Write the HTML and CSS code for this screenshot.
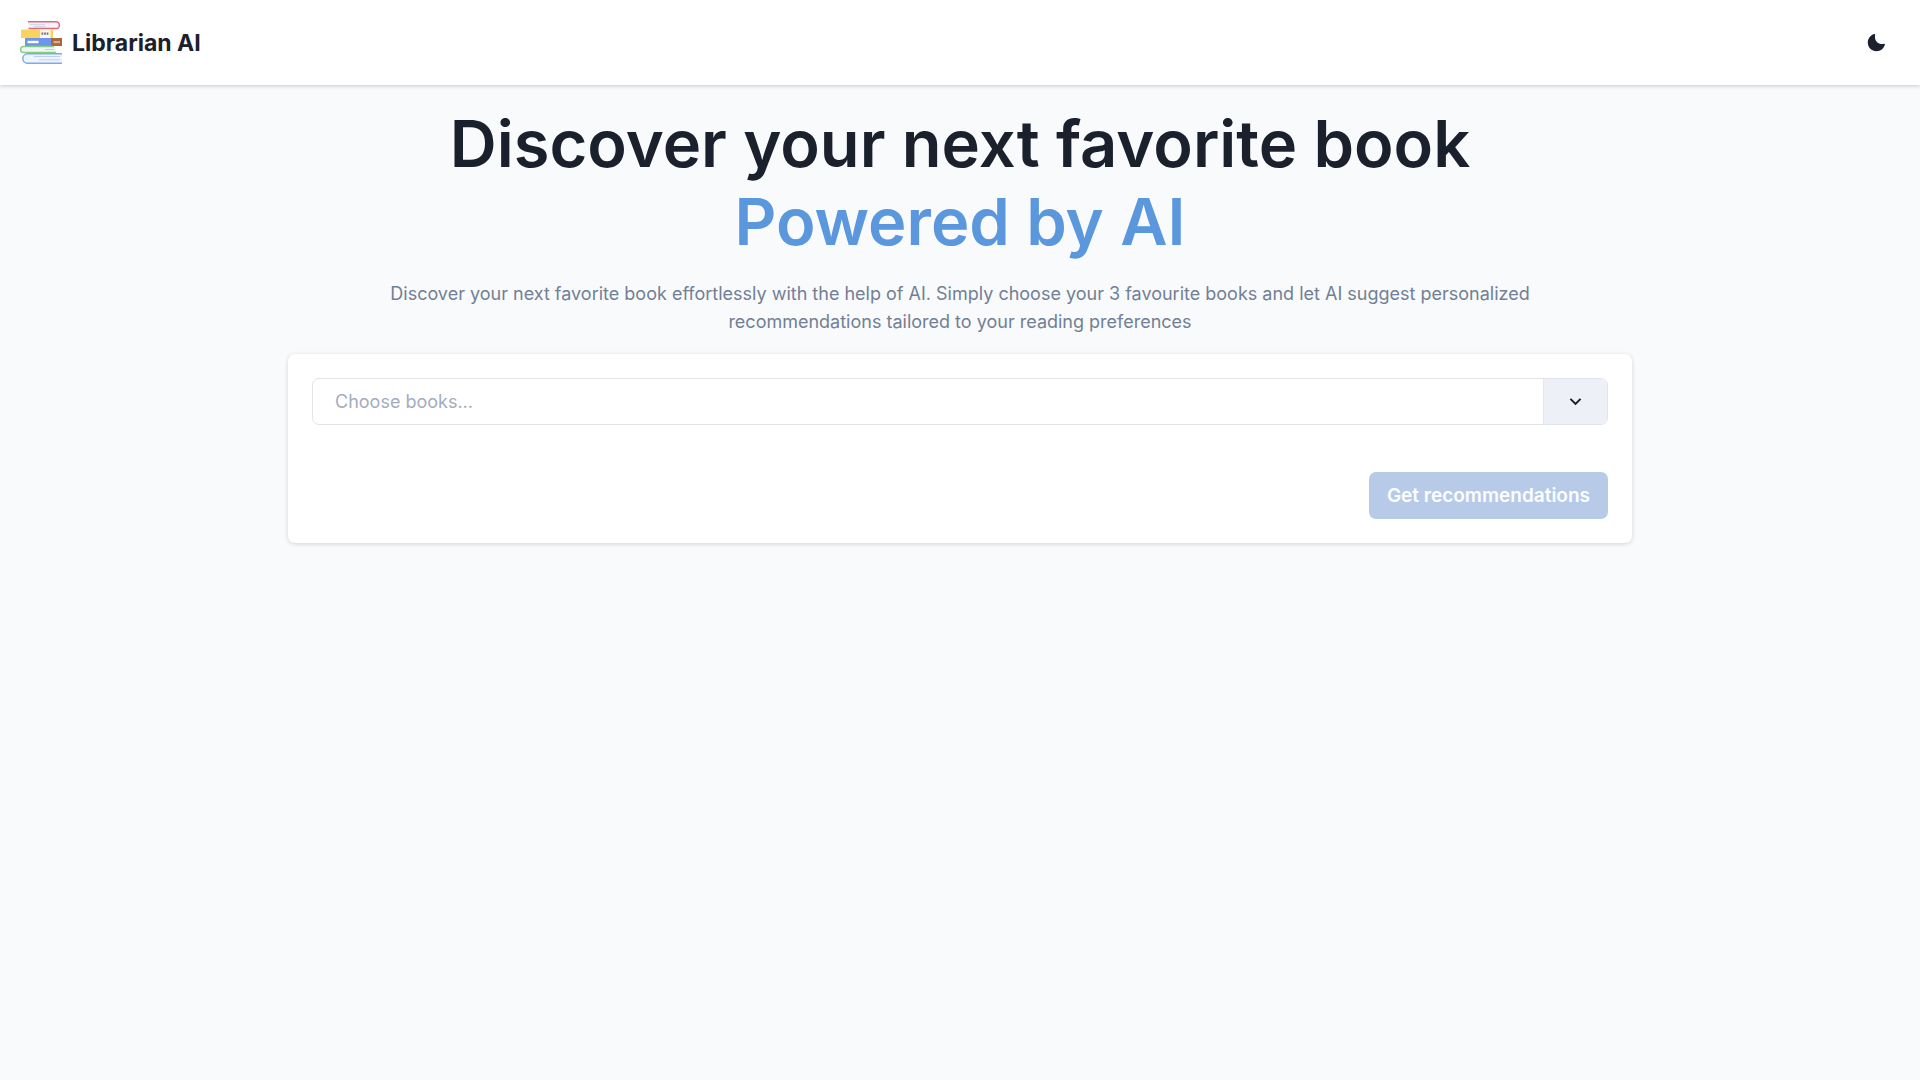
FILE: index.html
```html
<!DOCTYPE html>
<html lang="en">
<head>
<meta charset="utf-8">
<meta name="viewport" content="width=device-width, initial-scale=1">
<title>Librarian AI</title>
<link rel="stylesheet" href="styles.css">
</head>
<body>
<header class="topbar">
  <a class="brand" href="#">
    <svg class="brand-logo" viewBox="0 1 44 44" fill="none" aria-hidden="true">
      <path d="M8 1.800H36a3.400 3.400 0 0 1 0 6.800H8.500" fill="#f5f3f8"/>
      <path d="M10 4.600h15M14 6.400h12" stroke="#cfd6ea" stroke-width="1"/>
      <path d="M8 1.800H36a3.400 3.400 0 0 1 0 6.800H8.500" stroke="#e0687c" stroke-width="1.500"/>
      <path d="M1 9.500H33V18H1z" fill="#f8d45c"/>
      <path d="M20 9.500H30.500V18H20z" fill="#fff8e8"/>
      <path d="M21.500 13.700h7" stroke="#73698c" stroke-width="2.200" stroke-dasharray="1.700 .9"/>
      <path d="M5 18H31V26H5z" fill="#6c95ee"/>
      <path d="M7.500 20.800H18.500V23.200H7.500z" fill="#fff"/>
      <path d="M31 18H42V26H31z" fill="#a8683f"/>
      <path d="M33.500 21H40V23.200H33.500z" fill="#d9ad88"/>
      <path d="M36 26.500H3.500a3 3 0 0 0 0 6H36" fill="#eef7f3"/>
      <path d="M25 29.500H34" stroke="#bfd0e8"/>
      <path d="M34 26.600H3.500a3 3 0 0 0 0 6H36" stroke="#85cf85" stroke-width="1.500"/>
      <path d="M42 33.800H7.500a4.700 4.700 0 0 0 0 9.400H42" fill="#eef4fd"/>
      <path d="M14 36.500H40M19 39.800H40" stroke="#bfd0ee"/>
      <path d="M42 33.800H7.500a4.700 4.700 0 0 0 0 9.400H42" stroke="#82a8ec" stroke-width="1.500"/>
    </svg>
    <span>Librarian AI</span>
  </a>
  <button class="theme-toggle" type="button" aria-label="Switch to dark mode">
    <svg viewBox="0 0 24 24" aria-hidden="true"><path fill="currentColor" d="M21.400,13.700C20.600,13.900,19.800,14,19,14c-5,0-9-4-9-9c0-0.800,0.100-1.600,0.300-2.400c0.100-0.300,0-0.700-0.300-1c-0.300-0.300-0.600-0.400-1-0.300C4.300,2.700,1,7.100,1,12c0,6.100,4.900,11,11,11c4.900,0,9.300-3.300,10.600-8.100c0.100-0.300,0-0.700-0.300-1C22.100,13.700,21.700,13.600,21.400,13.700z"/></svg>
  </button>
</header>
<main class="content">
  <h1 class="title">Discover your next favorite book<span class="title-accent">Powered by AI</span></h1>
  <p class="lead">Discover your next favorite book effortlessly with the help of AI. Simply choose your 3 favourite books and let AI suggest personalized recommendations tailored to your reading preferences</p>
  <form class="card">
    <div class="picker">
      <input class="picker-input" type="text" placeholder="Choose books..." aria-label="Choose books">
      <button class="picker-toggle" type="button" aria-label="Show books">
        <svg viewBox="0 0 24 24" aria-hidden="true"><path fill="currentColor" d="M16.590 8.590L12 13.170 7.410 8.590 6 10l6 6 6-6z"/></svg>
      </button>
    </div>
    <button class="submit" type="submit" disabled>Get recommendations</button>
  </form>
</main>
</body>
</html>
```
FILE: styles.css
```css
* {
  box-sizing: border-box;
}

body {
  margin: 0;
  min-height: 100vh;
  background: #f9fafc;
  color: #1a202c;
  font-family: Inter, "Liberation Sans", sans-serif;
  font-size: 18px;
  line-height: 28px;
}

button,
input {
  font: inherit;
  color: inherit;
}

.topbar {
  display: flex;
  align-items: center;
  justify-content: space-between;
  padding: 19px 20px;
  background: #fff;
  box-shadow: 0 1px 4px rgba(0, 0, 0, 0.2);
}

.brand {
  display: flex;
  align-items: center;
  gap: 8px;
  color: inherit;
  font-size: 23px;
  font-weight: 700;
  text-decoration: none;
}

.brand-logo {
  width: 44px;
  height: 44px;
}

.theme-toggle {
  display: grid;
  place-items: center;
  width: 47px;
  height: 47px;
  padding: 0;
  border: 0;
  border-radius: 7px;
  background: none;
}

.theme-toggle svg {
  width: 19px;
  height: 19px;
}

.content {
  max-width: 1344px;
  margin: 0 auto;
  padding-top: 20px;
}

.title {
  margin: 0;
  font-size: 65px;
  font-weight: 600;
  line-height: 78px;
  text-align: center;
}

.title-accent {
  display: block;
  color: #5a97dc;
}

.lead {
  max-width: 1200px;
  margin: 19px auto 18px;
  color: #718096;
  text-align: center;
}

.card {
  display: flex;
  flex-direction: column;
  align-items: flex-end;
  gap: 47px;
  padding: 24px;
  border-radius: 7px;
  background: #fff;
  box-shadow: 0 1px 4px rgba(0, 0, 0, 0.16);
}

.picker {
  display: flex;
  width: 100%;
  height: 47px;
  border: 1px solid #e2e4ea;
  border-radius: 7px;
  overflow: hidden;
}

.picker-input {
  flex: 1;
  min-width: 0;
  padding: 0 22px;
  border: 0;
  background: none;
  outline: 0;
}

.picker-input::placeholder {
  color: #a3acbe;
  opacity: 1;
}

.picker-toggle {
  display: grid;
  place-items: center;
  width: 64px;
  padding: 0;
  border: 0;
  border-left: 1px solid #e2e8f0;
  background: #edf0f6;
}

.picker-toggle svg {
  width: 23px;
  height: 23px;
}

.submit {
  height: 47px;
  padding: 0 18px;
  border: 0;
  border-radius: 7px;
  background: #b7cbe9;
  color: #fbfdff;
  font-size: 19px;
  font-weight: 600;
}
```
